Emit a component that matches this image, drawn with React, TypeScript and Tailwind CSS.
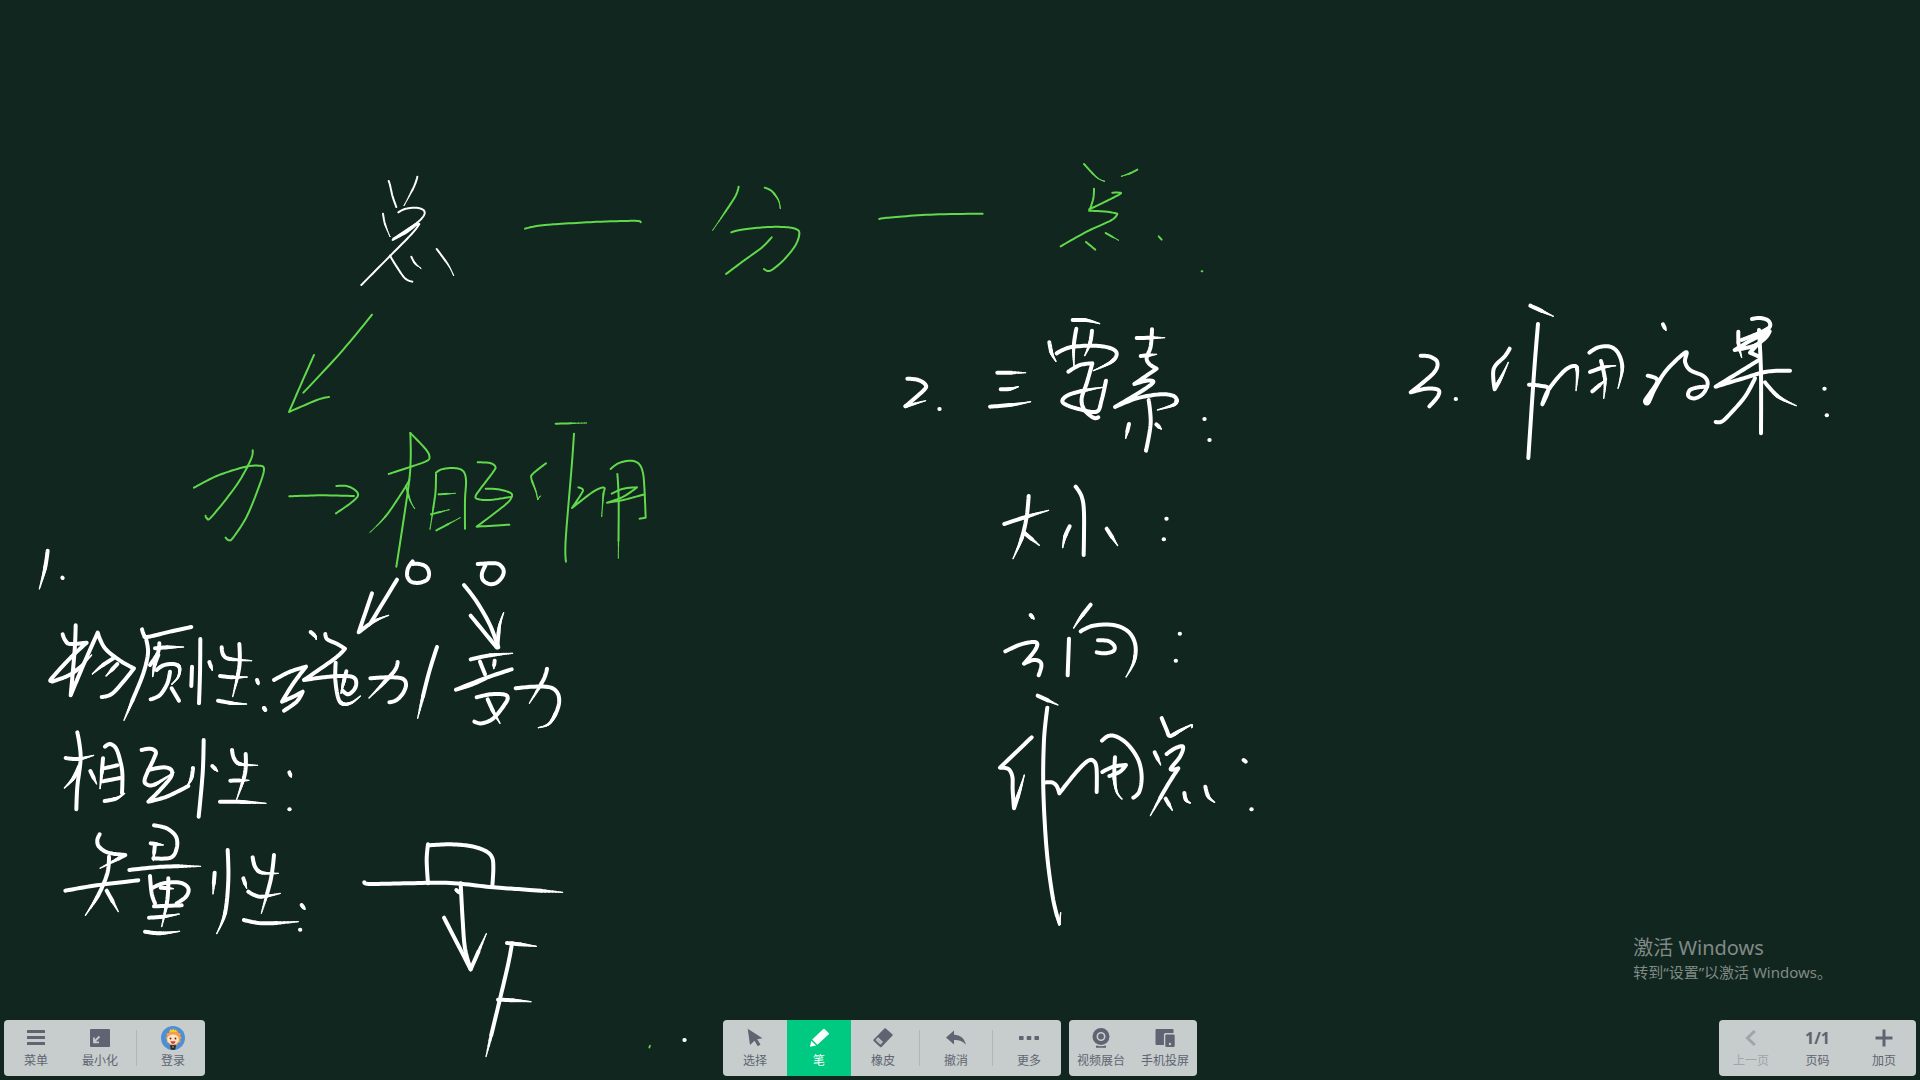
import type { ReactNode } from "react";

/* ---------- handwriting ---------- */

type Sheet = { x: number; y: number; color: string; width: number; strokes: string[] };

const WHITE = "#ffffff";
const GREEN = "#62d84c";

// Each stroke is a list of pen points. "c" after a point marks a sharp corner,
// ">" at the end marks a stroke that thins out as the pen lifts.
const SHEETS: Sheet[] = [
  {
    x: 340, y: 150, color: WHITE, width: 6,
    strokes: [
      "146,93 150,105 158,140 169,171",
      "232,80 222,110 192,167>",
      "129,191 135,222 150,260>",
      "175,187 195,177 225,173 247,178 254,188 247,203 225,223 158,270c 200,247 232,222c 238,222c 215,252 150,318 64,405",
      "160,266 232,219",
      "150,317 170,350 195,385 217,395",
      "214,320 225,340 243,355>",
      "290,297 325,345 341,377>",
    ],
  },
  {
    x: 340, y: 150, color: GREEN, width: 6,
    strokes: [
      "555,236 590,228 640,223 760,216 850,213 895,213 902,217",
      "1196,110 1188,135 1165,172 1118,241>",
      "1274,113 1295,123 1315,150 1321,176>",
      "1174,247 1200,240 1270,232 1330,231 1368,237 1378,252 1365,288 1330,331 1298,358 1283,363 1272,357",
      "1295,262 1265,293 1210,333 1158,372",
      "96,494 0,610 -110,728",
      "-78,615 -114,696 -153,786c -69,750 -33,741",
    ],
  },
  {
    x: 840, y: 140, color: GREEN, width: 6,
    strokes: [
      "118,237 145,233 270,224 428,221",
      "732,72 770,112 794,124>",
      "892,89 870,100 844,109>",
      "762,146 760,175 750,207c 800,183 840,162 838,158 817,158",
      "749,206 747,212c 800,215 832,221c 815,240 740,275 662,319",
      "797,279 836,301>",
      "738,306 766,329",
      "956,289 965,299",
      "1085,394 1087,394",
    ],
  },
  {
    x: 180, y: 400, color: GREEN, width: 6,
    strokes: [
      "42,263 110,228 190,202 235,197 252,208 235,265 200,350 160,412 147,421 137,413",
      "218,151 212,180 170,255 95,350 80,354 77,347",
      "328,289 420,286 522,288",
      "469,258 500,258 525,270 534,286 515,307 468,340",
      "626,222 690,201 740,183 748,168 735,145 691,99",
      "691,99 692,180 684,270 649,500",
      "688,240 672,268 620,345 570,397>",
      "678,258 690,300 704,326>",
      "768,222 767,270 762,310 750,388>",
      "768,218 785,208 820,204 848,212 858,240 855,300 855,386",
      "776,283 826,280>",
      "753,343 808,329>",
      "769,391 841,353>",
      "893,187 930,189 946,200 940,215 900,268 887,288 893,297 930,300 995,290",
      "917,266 955,268 990,278 995,290 975,315 890,380c 988,374",
      "1098,190 1060,220 1054,235 1068,275 1073,299c 1081,288>",
      "1127,71 1220,69>",
      "1182,101 1175,200 1157,420 1158,485",
      "1195,262 1208,268 1205,280 1176,324c 1240,275 1272,263 1270,285 1265,350>",
      "1292,207 1315,190 1350,182 1375,190 1388,215 1393,260 1397,353c 1379,356",
      "1312,222 1316,300 1315,475>",
      "1295,281 1330,266 1371,262c 1330,290 1281,308c 1330,300 1393,283",
    ],
  },
  {
    x: 180, y: 400, color: WHITE, width: 12,
    strokes: [
      "698,484 684,505 682,530 695,546 720,548 742,538 747,518 738,500 718,492 698,492",
      "893,492 930,490 955,492 970,508 968,528 950,548 928,552 909,540 906,520 917,495",
    ],
  },
  {
    x: 260, y: 560, color: WHITE, width: 12,
    strokes: [
      "411,59 333,187",
      "336,100 296,217c 340,185 386,166>",
      "612,75 650,125 690,195 715,262",
      "632,167 710,262",
      "712,262 718,200 731,158>",
      "152,216 165,228 169,238>",
      "196,222 202,238 232,252 255,266c 225,295 132,360c 190,352 240,348 275,350 288,362 285,385 265,403 248,392",
      "42,360 90,335 138,320c 100,370 66,425c 100,410 128,395c 110,425 72,452",
      "227,308 226,360 235,415 250,432 275,428 301,408>",
      "259,334 250,370 243,400>",
      "331,355 380,352 425,355 438,372 430,398 410,420 388,427",
      "413,306 405,330 370,370 327,414>",
      "531,261 505,345 473,475>",
      "632,298 690,286 758,280>",
      "660,305 675,343",
      "704,302 701,326>",
      "755,328 680,353 588,389c 640,372 680,353",
      "650,412 690,403 730,403 743,412 735,432 700,475 665,490 643,485",
      "683,418 700,455 720,490>",
      "767,385 820,380 870,382 893,400 897,430 885,465 865,493 835,503>",
      "861,326 850,360 808,430>",
      "12,444 15,448",
    ],
  },
  {
    x: 30, y: 540, color: WHITE, width: 12,
    strokes: [
      "53,32 45,85 28,147>",
      "97,113 98,114",
      "98,283 105,300 120,312 170,308c 120,355 65,415 65,423 75,422 130,398 185,345>",
      "137,256 134,330 122,466c 160,375 203,278c 225,325 275,365 312,385c 280,425 245,462 215,471",
      "250,355 215,378 187,402>",
      "262,372 228,408>",
      "336,268 342,285 352,291 420,275 484,261",
      "349,300 354,340 340,400 310,475 282,541>",
      "388,310 383,340 360,375",
      "375,325 410,322 461,321>",
      "385,345 374,375 368,410>",
      "380,390 400,376 430,372 448,382 445,410 425,433>",
      "420,395 412,430 390,465 362,478",
      "425,445 447,482",
      "484,438 486,380",
      "511,297 510,400 507,490",
      "538,366 547,391>",
      "575,322 580,345 600,357 665,362>",
      "628,312 628,380 608,470>",
      "570,408 610,412 652,411>",
      "564,482 610,490 650,492>",
      "681,420 686,434>",
      "702,504 706,510",
      "142,577 152,650 142,740 139,808",
      "107,654 145,657 191,646>",
      "147,680 130,715 103,744>",
      "181,693 200,732>",
      "219,655 215,700 210,746>",
      "225,620 240,612 258,625 270,660 277,700 276,760",
      "222,685 262,676",
      "218,724 270,714",
      "224,783 258,776 284,760>",
      "335,630 360,626 377,635 372,655 345,715 350,733 375,733 432,697>",
      "355,690 400,682 424,690 422,712 390,750 355,785c 410,770 475,738",
      "489,684 484,715 470,741>",
      "521,600 518,700 506,830",
      "547,678 563,694>",
      "606,630 612,655 630,672 683,676>",
      "647,642 645,700 620,778>",
      "601,722 657,721>",
      "570,785 640,786 708,790>",
      "778,697 784,711>",
      "778,808 779,808",
      "209,883 202,900 207,920 235,938 286,945c 210,985>",
      "237,950 232,1000 205,1065 166,1126>",
      "106,1052 200,1036 325,1021",
      "230,1052 265,1115>",
      "372,856 410,865 438,890 440,925 422,953 370,955",
      "375,912 370,962>",
      "362,910 400,915>",
      "298,990 400,980 512,979>",
      "360,1008 365,1060 375,1090",
      "365,1045 400,1030 450,1028 475,1045 468,1070 440,1090",
      "415,1015 412,1080 395,1160>",
      "392,1043 430,1046>",
      "372,1099 455,1096",
      "357,1133 400,1130 448,1122>",
      "345,1175 390,1180 449,1174>",
      "554,998 549,1062>",
      "593,930 595,1020 585,1120 560,1181>",
      "640,1015 650,1045>",
      "668,952 675,980 695,998 745,1000>",
      "732,945 722,1020 694,1120>",
      "655,1055 690,1070 751,1060>",
      "642,1140 700,1150 805,1145>",
      "815,1095 825,1108>",
      "810,1169 811,1169",
    ],
  },
  {
    x: 340, y: 820, color: WHITE, width: 12,
    strokes: [
      "264,73 260,120 264,190",
      "264,76 330,73 390,78 435,92 456,112 460,145 457,198",
      "73,187 90,192 190,190 330,189 460,202 560,209 668,217>",
      "349,210 357,217",
      "362,190 368,300 375,385 392,448",
      "312,293 392,448c 439,341>",
      "501,369 540,373 589,379>",
      "516,370 505,430 478,545 438,710>",
      "474,539 520,541 573,545>",
      "1033,660 1034,660",
    ],
  },
  { x: 340, y: 820, color: GREEN, width: 5, strokes: ["930,677 928,683"] },
  {
    x: 880, y: 290, color: WHITE, width: 12,
    strokes: [
      "82,266 115,270 137,285 130,302 76,349c 137,332>",
      "178,357 179,357",
      "352,248 437,248>",
      "362,298 390,297 415,290>",
      "330,350 400,344 452,335>",
      "578,90 620,91 659,101>",
      "508,157 515,190 528,214>",
      "530,190 570,172 640,167 690,174 710,190 695,215 640,242>",
      "589,116 581,170 582,232>",
      "636,122 630,160 614,197>",
      "565,245 600,225 637,220c 620,280 605,325 612,358 640,383 655,382",
      "678,272 665,330 650,365 600,358 560,345 547,332 565,315 610,302 668,292>",
      "816,118 812,170 800,203 808,222 830,236c 763,282c 800,272 820,276 790,300 705,351c 770,325 840,313 878,317 890,330 880,345 832,360>",
      "770,144 854,143>",
      "782,198 830,193>",
      "806,330 812,400 798,482",
      "747,402 737,445>",
      "829,403 844,417>",
      "973,387 974,387",
      "988,450 989,450",
      "446,618 440,680 425,745 399,806>",
      "373,702 440,680 506,661>",
      "432,728 478,766>",
      "587,590 605,620 612,670 611,795",
      "569,709 555,740 548,773>",
      "680,716 713,767>",
      "859,686 860,686",
      "851,748 852,748",
    ],
  },
  {
    x: 980, y: 590, color: WHITE, width: 12,
    strokes: [
      "152,75 162,87>",
      "76,184 120,164 160,156 172,163 162,185 132,221c 160,210 180,215 184,230 176,256",
      "332,44 300,85 281,114>",
      "267,146 263,256",
      "302,124 340,107 400,105 445,125 466,165 462,215 438,261>",
      "354,151 385,153 403,168 400,183 375,190 350,187",
      "599,131 600,131",
      "587,212 588,212",
      "173,317 234,345>",
      "202,353 192,450 190,600 200,780 218,920 238,1003c 242,968>",
      "155,442 60,533c 85,537 97,560 98,600 102,655c 120,600 133,555>",
      "192,578 215,577 230,588 238,610c 290,545 325,512 343,515 350,540 350,606",
      "366,452 385,438 410,440 445,465 475,510 485,560 478,605 460,623",
      "405,502 403,560 410,605 426,627>",
      "367,546 400,530 438,525c 420,545 388,558",
      "545,384 560,420 570,438 600,422 634,405 635,413>",
      "524,487 542,525>",
      "560,492 585,475 609,470 600,500 572,537 595,535c 560,590 511,677>",
      "557,626 577,661>",
      "613,609 618,630 631,639>",
      "676,590 685,620 704,637>",
      "791,510 797,515",
      "814,658 815,658",
    ],
  },
  {
    x: 1390, y: 290, color: WHITE, width: 12,
    strokes: [
      "92,197 120,200 142,217 130,250 62,307c 110,296 145,300 143,320 118,349",
      "197,327 198,327",
      "421,47 490,79>",
      "359,176 345,198 311,237 314,298c 335,260 355,217>",
      "444,102 432,250 415,504",
      "417,284 450,287 475,297 457,343c 475,300 520,245 550,228 562,240 558,302>",
      "598,188 625,172 660,170 685,190 697,235 684,295>",
      "633,213 645,270 641,325>",
      "600,246 640,232 677,227>",
      "607,304 650,267>",
      "819,103 828,121>",
      "773,257 798,265 800,280 780,310 765,333 775,338 795,295 830,240 887,187 885,215 900,240 940,258 953,280 940,310 915,325 895,318 900,300 925,292 952,290",
      "1086,87 1110,84 1135,92 1138,112 1100,132 1055,150",
      "1045,125 1046,165 1055,202>",
      "1139,124 1085,150 1034,180c 1090,168 1125,145 1139,124c 1080,188c 1108,200",
      "1107,120 1113,250 1113,430",
      "1110,208 1050,245 977,290c 1060,265 1130,245 1200,242",
      "1095,265 1065,320 1020,372 995,395 977,396",
      "1125,277 1165,320 1219,347>",
      "1303,296 1304,296",
      "1310,376 1311,376",
    ],
  },
];

type Pt = { x: number; y: number; corner: boolean };

function sample(stroke: string) {
  const pts: Pt[] = stroke.replace(">", "").trim().split(" ").map((t) => {
    const [x, y] = t.replace("c", "").split(",").map(Number);
    return { x, y, corner: t.endsWith("c") };
  });
  const tangent = (i: number) => {
    if (pts[i].corner || i === 0 || i === pts.length - 1) return { x: 0, y: 0 };
    return { x: (pts[i + 1].x - pts[i - 1].x) / 2, y: (pts[i + 1].y - pts[i - 1].y) / 2 };
  };
  const out = [{ x: pts[0].x, y: pts[0].y }];
  for (let i = 0; i < pts.length - 1; i++) {
    const a = pts[i];
    const b = pts[i + 1];
    const ta = tangent(i);
    const tb = tangent(i + 1);
    for (let k = 1; k <= 12; k++) {
      const t = k / 12;
      const h1 = 2 * t ** 3 - 3 * t ** 2 + 1;
      const h2 = t ** 3 - 2 * t ** 2 + t;
      const h3 = -2 * t ** 3 + 3 * t ** 2;
      const h4 = t ** 3 - t ** 2;
      out.push({
        x: h1 * a.x + h2 * ta.x + h3 * b.x + h4 * tb.x,
        y: h1 * a.y + h2 * ta.y + h3 * b.y + h4 * tb.y,
      });
    }
  }
  return out;
}

function Stroke({ stroke, width }: { stroke: string; width: number }) {
  const pts = sample(stroke);
  const tapered = stroke.endsWith(">");
  const d = (list: { x: number; y: number }[]) =>
    list.map((p, i) => `${i ? "L" : "M"}${p.x.toFixed(1)} ${p.y.toFixed(1)}`).join("");
  if (!tapered) return <path d={d(pts)} strokeWidth={width} />;
  const lengths = [0];
  for (let i = 1; i < pts.length; i++) {
    lengths.push(lengths[i - 1] + Math.hypot(pts[i].x - pts[i - 1].x, pts[i].y - pts[i - 1].y));
  }
  const total = lengths[lengths.length - 1];
  const start = total - Math.min(total * 0.6, 70);
  const cut = Math.max(1, lengths.findIndex((l) => l >= start));
  return (
    <>
      <path d={d(pts.slice(0, cut + 1))} strokeWidth={width} />
      {pts.slice(cut, -1).map((p, i) => {
        const f = (lengths[cut + i + 1] - start) / (total - start);
        return <path key={i} d={d([p, pts[cut + i + 1]])} strokeWidth={Math.max(3, width * (1 - 0.7 * f))} />;
      })}
    </>
  );
}

function Ink() {
  return (
    <svg
      viewBox="0 0 1920 1080"
      preserveAspectRatio="xMinYMin meet"
      className="absolute inset-0 h-full w-full"
      role="img"
      aria-label="板书：总—分—总；力→相互作用；1. 物质性：施力/受力，相互性，矢量性；2. 三要素：大小，方向，作用点；3. 作用效果"
    >
      {SHEETS.map((s, i) => (
        <g
          key={i}
          transform={`translate(${s.x} ${s.y}) scale(0.33333)`}
          stroke={s.color}
          fill="none"
          strokeLinecap="round"
          strokeLinejoin="round"
        >
          {s.strokes.map((k) => (
            <Stroke key={k} stroke={k} width={s.width} />
          ))}
        </g>
      ))}
    </svg>
  );
}

/* ---------- toolbar icons ---------- */

function Icon({ children }: { children: ReactNode }) {
  return (
    <svg viewBox="0 0 24 20" className="h-5 w-6" fill="currentColor" aria-hidden="true">
      {children}
    </svg>
  );
}

const MenuIcon = () => (
  <Icon>
    <rect x="3" y="2" width="18" height="3" rx="0.6" />
    <rect x="3" y="8" width="18" height="3" rx="0.6" />
    <rect x="3" y="14" width="18" height="3" rx="0.6" />
  </Icon>
);

const MinimizeIcon = () => (
  <Icon>
    <rect x="2" y="1" width="20" height="18" rx="1" />
    <path d="M11.5 8.5 6.5 13.5M6 9.5v4.8h5" fill="none" stroke="#c6cdcc" strokeWidth="1.8" />
  </Icon>
);

const Avatar = () => (
  <svg viewBox="0 0 24 24" className="-mt-0.5 -mb-0.5 size-6" aria-hidden="true">
    <circle cx="12" cy="12" r="12" fill="#4d8fd6" />
    <path
      d="M12 3.2 14 5l2.6-.6.6 2.3 2.6.8-.6 2.5 1.6 2-1.7 1.8.6 2.4-2.5.5-1 2.2-3.6-.2-3.6.2-1-2.2-2.5-.5.6-2.4-1.7-1.8 1.6-2-.6-2.5 2.6-.8.6-2.3L10 5z"
      fill="#f0a04a"
    />
    <path d="M8.500 6 9.500 2.800l1.500 1.600 1.200-2 1.300 2 1.600-1.500.4 3.100z" fill="#ffc928" />
    <ellipse cx="12" cy="13.400" rx="5.800" ry="5" fill="#ffe3c4" />
    <circle cx="9.500" cy="12.500" r="0.900" fill="#4a2a20" />
    <circle cx="14.500" cy="12.500" r="0.900" fill="#4a2a20" />
    <path d="M9.500 15.200h5c-.3 1.900-1.300 2.500-2.500 2.500s-2.200-.6-2.500-2.500z" fill="#d9363e" />
    <path d="M9 19.200h6l-.7 4.400a12 12 0 0 1-4.600 0z" fill="#2a2a2a" />
    <circle cx="12" cy="21" r="0.800" fill="#e8b84a" />
  </svg>
);

const PointerIcon = () => (
  <Icon>
    <path d="M4.700.8 19.500 10.300l-5.300.9 3.300 5.400-2.700 1.600-3.300-5.500L7 17z" />
  </Icon>
);

const PenIcon = () => (
  <Icon>
    <path d="M16.300.9q.6-.5 1.200 0l4.200 4.100q.6.600 0 1.200L10.400 16.800 5.200 11.600z" />
    <path d="M4.200 12.700 9.200 17.600 3 18.700z" />
  </Icon>
);

const EraserIcon = () => (
  <Icon>
    <path d="M13.400.6q.7-.6 1.400 0l6.600 5.700q.7.700 0 1.400L10.500 19q-.7.600-1.400 0L2.600 13q-.7-.700 0-1.400z" />
    <path d="M7.100 9.200 12 14l-2.600 2.600-4.800-4.600z" fill="#c6cdcc" />
    <path d="M7 10.600 10.400 14 9.200 15.300 5.800 12z" fill="currentColor" opacity="0.25" />
  </Icon>
);

const UndoIcon = () => (
  <Icon>
    <path d="M10 2.500v4.300c6.500 0 10.800 4.200 11.900 10-3-3.600-6.700-4.800-11.900-4.800v4.400L2 9.400z" />
  </Icon>
);

const MoreIcon = () => (
  <Icon>
    <rect x="2" y="8" width="4.600" height="4" rx="0.700" />
    <rect x="9.700" y="8" width="4.600" height="4" rx="0.700" />
    <rect x="17.400" y="8" width="4.600" height="4" rx="0.700" />
  </Icon>
);

const CameraIcon = () => (
  <Icon>
    <circle cx="12" cy="8.500" r="8.500" />
    <circle cx="12" cy="8.500" r="3.700" fill="none" stroke="#c6cdcc" strokeWidth="1.600" />
    <path d="M7 17.400q5 1.600 10 0v2.400H7z" />
  </Icon>
);

const CastIcon = () => (
  <Icon>
    <path d="M3.500 1h16q1 0 1 1v3h-8q-1.600 0-1.600 1.600V17H3.500q-1 0-1-1V2q0-1 1-1z" />
    <rect x="12.300" y="6.500" width="9.400" height="12.500" rx="1.200" />
    <circle cx="17" cy="16" r="1.200" fill="#c6cdcc" />
  </Icon>
);

const PrevIcon = () => (
  <Icon>
    <path d="M15.800 3 8.500 10l7.300 7" fill="none" stroke="currentColor" strokeWidth="3" />
  </Icon>
);

const AddIcon = () => (
  <Icon>
    <path d="M12 1.500v17M3.500 10h17" stroke="currentColor" strokeWidth="3" />
  </Icon>
);

/* ---------- toolbar ---------- */

function Tool({
  label,
  children,
  active = false,
  disabled = false,
}: {
  label: string;
  children: ReactNode;
  active?: boolean;
  disabled?: boolean;
}) {
  const tone = active ? "bg-[#00ca81] text-white" : disabled ? "text-[#9fa5a9]" : "text-[#606472]";
  return (
    <button
      type="button"
      disabled={disabled}
      aria-pressed={active || undefined}
      className={`flex h-14 w-16 flex-col items-center gap-1 pt-2 ${tone}`}
    >
      <span className="flex h-5 items-center text-base font-bold">{children}</span>
      <span className="text-xs leading-[18px] whitespace-nowrap">{label}</span>
    </button>
  );
}

const Divider = () => <span className="mx-1 h-9 w-px bg-[#b0b7b7]" />;

function Group({ children, className = "" }: { children: ReactNode; className?: string }) {
  return (
    <div className={`flex items-center overflow-hidden rounded bg-[#c6cdcc] ${className}`}>{children}</div>
  );
}

export default function App() {
  return (
    <main className="relative flex min-h-screen flex-col overflow-hidden bg-[#10261f] font-['Noto_Sans','Noto_Sans_CJK_SC',sans-serif]">
      <Ink />

      <aside className="absolute right-[88px] bottom-[98px] text-[#828a86]">
        <p className="text-xl leading-7">激活 Windows</p>
        <p className="text-[15px] leading-5">转到“设置”以激活 Windows。</p>
      </aside>

      <footer className="relative mt-auto grid grid-cols-[1fr_auto_1fr] items-end px-1 pb-1">
        <Group className="justify-self-start">
          <Tool label="菜单">
            <MenuIcon />
          </Tool>
          <Tool label="最小化">
            <MinimizeIcon />
          </Tool>
          <Divider />
          <Tool label="登录">
            <Avatar />
          </Tool>
        </Group>

        <div className="flex gap-2">
          <Group>
            <Tool label="选择">
              <PointerIcon />
            </Tool>
            <Tool label="笔" active>
              <PenIcon />
            </Tool>
            <Tool label="橡皮">
              <EraserIcon />
            </Tool>
            <Divider />
            <Tool label="撤消">
              <UndoIcon />
            </Tool>
            <Divider />
            <Tool label="更多">
              <MoreIcon />
            </Tool>
          </Group>
          <Group>
            <Tool label="视频展台">
              <CameraIcon />
            </Tool>
            <Tool label="手机投屏">
              <CastIcon />
            </Tool>
          </Group>
        </div>

        <Group className="w-[197px] justify-between justify-self-end">
          <Tool label="上一页" disabled>
            <PrevIcon />
          </Tool>
          <Tool label="页码">1/1</Tool>
          <Tool label="加页">
            <AddIcon />
          </Tool>
        </Group>
      </footer>
    </main>
  );
}
